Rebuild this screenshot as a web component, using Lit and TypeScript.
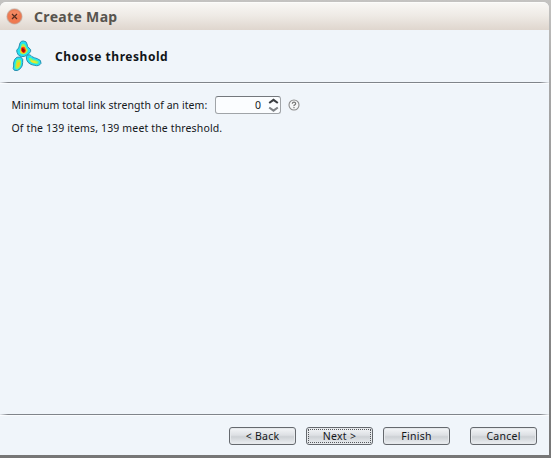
import { LitElement, html, css } from "lit";
import { customElement } from "lit/decorators.js";

@customElement("app-root")
export class AppRoot extends LitElement {
  static styles = css`
    :host {
      display: block;
      width: 551px;
      height: 458px;
      overflow: hidden;
      box-sizing: border-box;
      padding: 2px 2px 3px 0;
      background: linear-gradient(#c4c3c1, #a8a8a8 80px, #8c8c8c 300px, #767676);
      font: 10.5px/16px "Noto Sans", "Open Sans", sans-serif;
      letter-spacing: 0.06px;
      color: #14171b;
    }
    * { box-sizing: border-box; }
    svg { display: block; flex: none; }
    span { white-space: nowrap; }
    .window {
      display: flex;
      flex-direction: column;
      width: 549px;
      height: 453px;
      background: #f0f5fa;
      border-radius: 6px 6px 0 0;
      overflow: hidden;
    }
    .titlebar {
      display: flex;
      align-items: center;
      height: 28px;
      flex: none;
      padding-left: 6px;
      gap: 11px;
      background: linear-gradient(#f8f7f4, #efebe6 45%, #dfd6ce);
      border-top: 1px solid #fcfcfa;
    }
    .title {
      font-weight: 700;
      font-size: 14px;
      line-height: 20px;
      letter-spacing: 0.33px;
      color: #57544e;
    }
    .header {
      display: flex;
      align-items: center;
      flex: none;
      height: 52px;
      padding: 0 0 0 10px;
      gap: 13px;
    }
    .heading {
      padding-top: 2px;
      font-size: 12px;
      font-weight: 700;
      letter-spacing: 0.54px;
      color: #101418;
    }
    .rule {
      height: 1px;
      flex: none;
      background: linear-gradient(90deg, #e5e9ee, #80848a 8px, #80848a 540px, #e5e9ee);
      box-shadow: 0 1px #fafcfe;
    }
    .body { flex: 1; padding: 12px 0 0 11.5px; }
    .row { display: flex; align-items: center; height: 20px; }
    .label { width: 203.5px; }
    .spinner {
      display: flex;
      align-items: center;
      justify-content: flex-end;
      width: 66px;
      height: 18px;
      margin-right: 7px;
      padding-right: 1px;
      gap: 7px;
      border: 1px solid #a0a4a8;
      border-top-color: #74787d;
      border-radius: 3px;
      background: #fbfdff;
    }
    .summary { display: flex; height: 16px; margin-top: 5px; letter-spacing: 0.14px; }
    .footer {
      display: flex;
      flex: none;
      height: 40px;
      padding: 12px 12px 0 0;
      justify-content: flex-end;
      gap: 10px;
    }
    .button {
      display: flex;
      align-items: center;
      justify-content: center;
      position: relative;
      width: 67px;
      height: 18px;
      border: 1px solid #65696e;
      border-radius: 3px;
      letter-spacing: 0.25px;
      background: linear-gradient(#f4f6f8, #dde0e4 45%, #cdd1d5 55%, #eceff2);
      box-shadow: inset 0 0 0 1px #e6e9ec;
    }
    .focused::after {
      content: "";
      position: absolute;
      inset: 1px;
      border: 1px dotted #55585c;
    }
    .cancel { margin-left: 10px; }
  `;

  render() {
    return html`
      <div class="window">
        <div class="titlebar">
          <svg width="17" height="17" viewBox="0 0 17 17">
            <circle cx="8.5" cy="8.5" r="8.2" fill="#cfc4bc" />
            <circle cx="8.5" cy="8.5" r="7" fill="#f0794f" stroke="#dc8263" stroke-width=".8" />
            <ellipse cx="8.5" cy="5.5" rx="5" ry="3" fill="#f58d68" opacity=".7" />
            <path d="M6 6l5 5M11 6l-5 5" stroke="#572b1e" stroke-width="1.2" />
          </svg>
          <span class="title">Create Map</span>
        </div>
        <div class="header">
          <svg width="32" height="36" viewBox="0 0 96 108">
            <g fill="#22e4f4" stroke="#2b8fae" stroke-width="3" stroke-linejoin="round">
              <path d="M30 15Q33 8 40 9Q50 9 51 18Q51 26 57 30Q64 34 62 40Q58 48 51 51Q44 57 34 56Q22 52 21 43Q17 36 26 30Z" />
              <path d="M14 64Q19 55 32 57Q41 62 38 74Q38 85 31 92Q22 101 13 97Q7 92 11 84Q9 76 14 64Z" />
              <path d="M49 55Q58 45 66 56Q74 60 82 62Q95 66 93 76Q87 86 73 82Q62 81 54 73Q48 66 49 55Z" />
            </g>
            <path d="M35 19Q42 14 46 22Q48 31 54 36Q54 43 46 48Q37 52 30 45Q27 37 32 30Z" fill="#96f45e" />
            <path d="M35 25Q42 20 46 28L50 37Q50 45 42 47Q34 47 31 41Z" fill="#ffd21c" />
            <path d="M33 30Q40 23 45 29L48 38Q46 46 40 45Q32 42 33 30Z" fill="#f8401a" />
            <path d="M36 31Q41 29 45 37L43 43Q38 44 35 38Z" fill="#a80808" />
            <path d="M20 67Q29 61 33 69Q34 81 28 89Q20 96 16 90Q16 80 18 72Z" fill="#a8f448" />
            <path d="M22 75Q28 69 30 76Q29 84 24 88Q18 89 22 75Z" fill="#ffc91c" />
            <path d="M56 61Q62 57 67 64Q76 66 85 70Q88 77 80 78Q66 77 59 70Z" fill="#8cf46a" />
            <path d="M62 66Q70 67 82 73Q76 78 64 72Z" fill="#f4e52a" />
          </svg>
          <span class="heading">Choose threshold</span>
        </div>
        <div class="rule"></div>
        <div class="body">
          <div class="row">
            <div class="label"><span>Minimum total link strength of an item:</span></div>
            <div class="spinner">
              <span>0</span>
              <svg width="11" height="14" viewBox="0 0 11 14">
                <path d="M1.2 5L5.5 1.9L9.8 5" fill="none" stroke="#393d41" stroke-width="2.1" />
                <path d="M1.2 9.5L5.5 12.6L9.8 9.5" fill="none" stroke="#808488" stroke-width="2.1" />
              </svg>
            </div>
            <svg width="12" height="12" viewBox="0 0 12 12">
              <circle cx="6" cy="6" r="5" fill="#f6f7f8" stroke="#8c8c8c" stroke-width="1.1" />
              <path d="M4.3 4.7Q4.4 3.2 6 3.2T7.7 4.7Q7.6 5.5 6.7 5.9T6 7.2M6 8v1.2" fill="none" stroke="#777" stroke-width="1.2" />
            </svg>
          </div>
          <div class="summary"><span>Of the 139 items, 139 meet the threshold.</span></div>
        </div>
        <div class="rule"></div>
        <div class="footer">
          <div class="button"><span>&lt; Back</span></div>
          <div class="button focused"><span>Next &gt;</span></div>
          <div class="button"><span>Finish</span></div>
          <div class="button cancel"><span>Cancel</span></div>
        </div>
      </div>
    `;
  }
}
